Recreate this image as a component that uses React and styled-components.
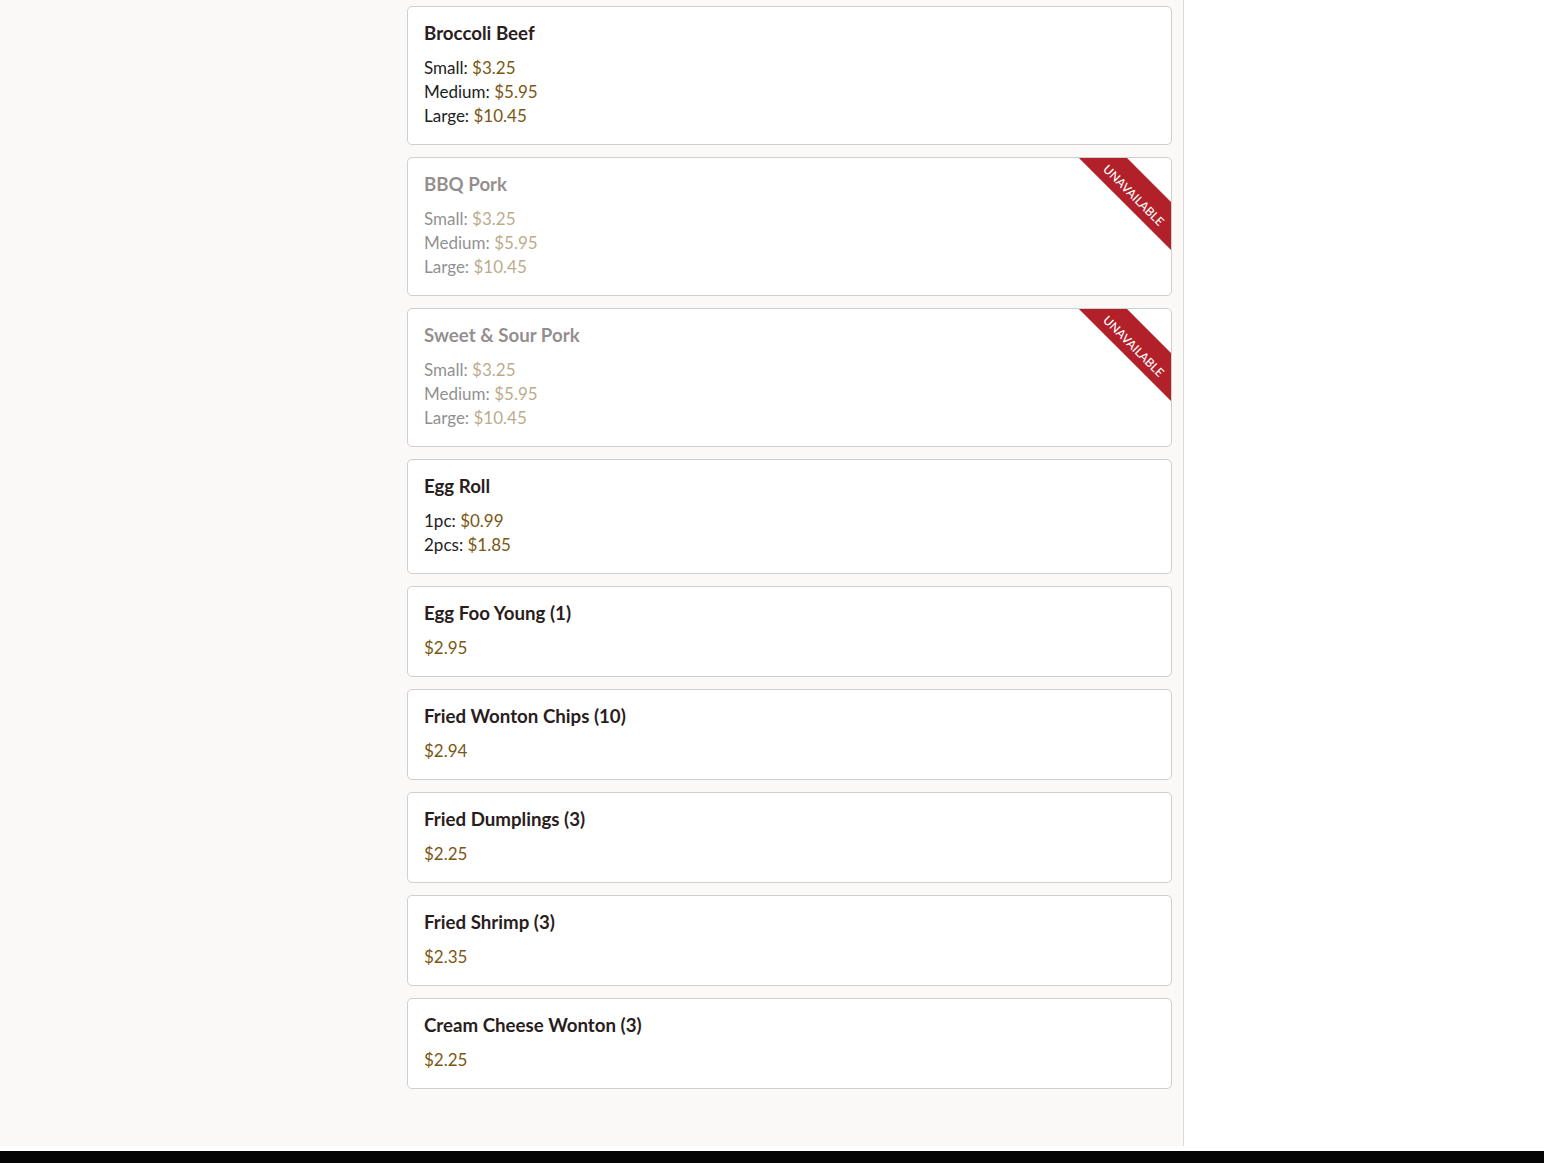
import React from "react";
import styled, { createGlobalStyle } from "styled-components";

const items = [
  {
    name: "Broccoli Beef",
    prices: [
      ["Small", "$3.25"],
      ["Medium", "$5.95"],
      ["Large", "$10.45"],
    ],
  },
  {
    name: "BBQ Pork",
    unavailable: true,
    prices: [
      ["Small", "$3.25"],
      ["Medium", "$5.95"],
      ["Large", "$10.45"],
    ],
  },
  {
    name: "Sweet & Sour Pork",
    unavailable: true,
    prices: [
      ["Small", "$3.25"],
      ["Medium", "$5.95"],
      ["Large", "$10.45"],
    ],
  },
  {
    name: "Egg Roll",
    prices: [
      ["1pc", "$0.99"],
      ["2pcs", "$1.85"],
    ],
  },
  { name: "Egg Foo Young (1)", prices: [[null, "$2.95"]] },
  { name: "Fried Wonton Chips (10)", prices: [[null, "$2.94"]] },
  { name: "Fried Dumplings (3)", prices: [[null, "$2.25"]] },
  { name: "Fried Shrimp (3)", prices: [[null, "$2.35"]] },
  { name: "Cream Cheese Wonton (3)", prices: [[null, "$2.25"]] },
];

const App = () => {
  return (
    <>
      <GlobalStyle />
      <Layout>
        <Main>
          <List>
            {items.map((item) => (
              <Card key={item.name}>
                {item.unavailable && <Ribbon>UNAVAILABLE</Ribbon>}
                <Faded $off={item.unavailable}>
                  <Title>{item.name}</Title>
                  {item.prices.map(([label, price]) => (
                    <PriceRow key={price + label}>
                      {label && <Label>{label}: </Label>}
                      <Price>{price}</Price>
                    </PriceRow>
                  ))}
                </Faded>
              </Card>
            ))}
          </List>
        </Main>
        <Side />
      </Layout>
      <Footer />
    </>
  );
};

export default App;

const GlobalStyle = createGlobalStyle`
  html, body {
    margin: 0;
    padding: 0;
    background: #ffffff;
  }
  body {
    font-family: "Lato", "Noto Sans", sans-serif;
  }
`;

const Layout = styled.div`
  display: flex;
  height: 1146px;
  overflow: hidden;
  margin-bottom: 5px;
`;

const Main = styled.main`
  width: 1184px;
  box-sizing: border-box;
  background: #faf9f7;
  border-right: 1px solid #d9d9d9;
  display: flex;
  justify-content: flex-end;
  padding: 6px 11px 0 0;
`;

const Side = styled.aside`
  flex: 1;
  background: #ffffff;
`;

const List = styled.div`
  width: 765px;
  display: flex;
  flex-direction: column;
  gap: 12px;
`;

const Card = styled.div`
  position: relative;
  overflow: hidden;
  background: #ffffff;
  border: 1px solid #cfcfcf;
  border-radius: 5px;
  padding: 16px 16px 16px;
`;

const Faded = styled.div`
  opacity: ${(p) => (p.$off ? 0.5 : 1)};
`;

const Title = styled.h3`
  margin: 0 0 13px;
  font-size: 18.7px;
  line-height: 20px;
  font-weight: 700;
  color: #2a1d1d;
`;

const PriceRow = styled.div`
  font-size: 17px;
  line-height: 24px;
  color: #222222;
`;

const Label = styled.span``;

const Price = styled.span`
  color: #7a5714;
`;

const Ribbon = styled.div`
  position: absolute;
  top: 17px;
  right: -41px;
  width: 150px;
  height: 34px;
  box-sizing: border-box;
  padding-top: 8px;
  background: #b2202a;
  color: #ffffff;
  font-size: 12px;
  font-weight: 500;
  display: flex;
  align-items: center;
  justify-content: center;
  transform: rotate(45deg);
`;

const Footer = styled.footer`
  height: 40px;
  background: #050505;
`;
